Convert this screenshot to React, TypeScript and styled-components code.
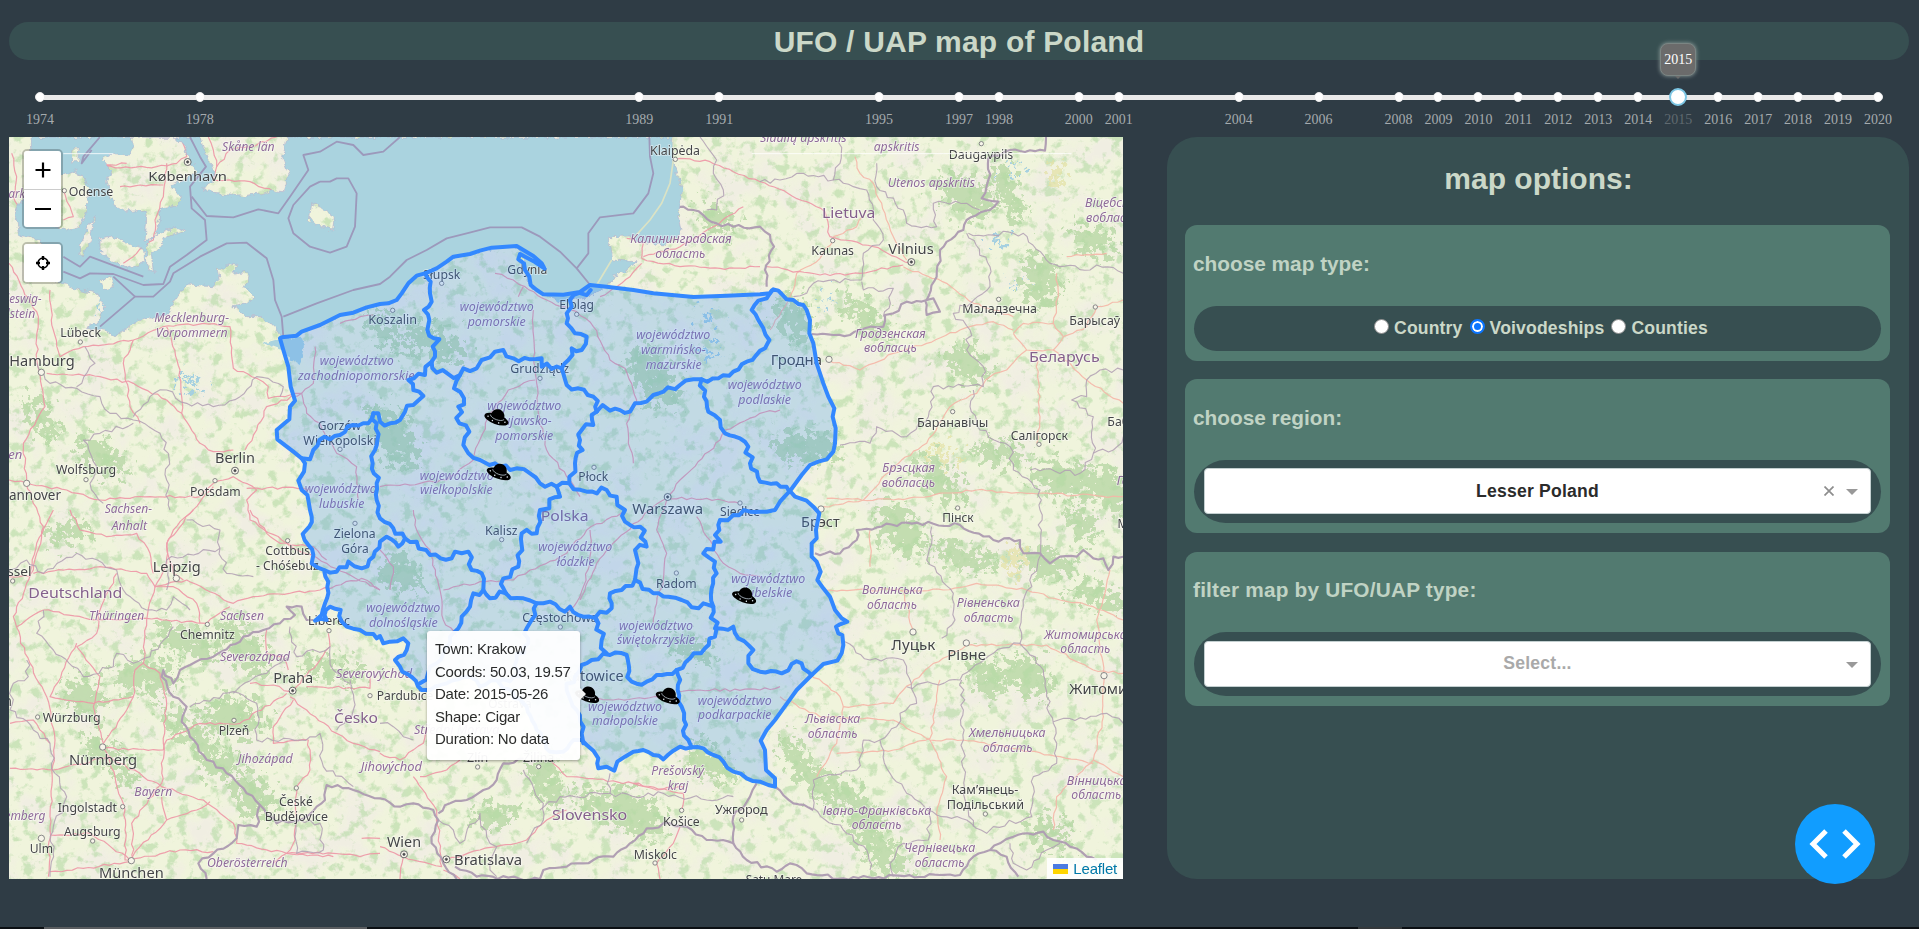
import React from "react";
import styled, { createGlobalStyle } from "styled-components";

/* ---------- palette ---------- */
const c = {
  page: "#2f3c45",
  panel: "#374f51",
  card: "#527a70",
  text: "#cbd8c8",
  track: "#e9e9e9",
};

const Global = createGlobalStyle`
  * { box-sizing: border-box; }
  html, body { margin: 0; background: ${c.page}; overflow: hidden; }
  body { font-family: "Liberation Sans", Arial, sans-serif; }
`;

/* ---------- page frame ---------- */
const Page = styled.div`
  display: flex;
  flex-direction: column;
  width: 1919px;
  height: 929px;
  padding-top: 22px;
  background: ${c.page};
  overflow: hidden;
`;
const Header = styled.header`
  display: flex;
  align-items: center;
  justify-content: center;
  flex: none;
  height: 38px;
  margin: 0 10px 0 9px;
  border-radius: 20px;
  background: ${c.panel};
`;
const Title = styled.h1`
  margin: 2px 0 0;
  font-size: 30px;
  line-height: 36px;
  letter-spacing: 0.2px;
  color: ${c.text};
`;
const Main = styled.main`
  display: flex;
  justify-content: space-between;
  flex: none;
  height: 742px;
  margin: 0 10px 0 9px;
`;
const Taskbar = styled.footer`
  display: flex;
  flex: none;
  height: 2px;
  margin-top: auto;
  background: #0b0f13;
`;
const TaskbarItem = styled.div<{ $start: number; $width: number; $tone: string }>`
  flex: none;
  width: ${(p) => p.$width}px;
  margin-left: ${(p) => p.$start}px;
  background: ${(p) => p.$tone};
`;

/* ---------- timeline ---------- */
const Timeline = styled.section`
  display: grid;
  grid-template-columns: repeat(47, 1fr);
  grid-template-rows: 28px 18px 31px;
  align-items: center;
  flex: none;
  height: 77px;
  margin: 0 21px 0 20px;
`;
const Track = styled.div`
  grid-column: 1 / -1;
  grid-row: 2;
  height: 5px;
  margin: 0 20px;
  border-radius: 3px;
  background: ${c.track};
`;
const Dot = styled.button<{ $col: number; $active: boolean }>`
  grid-column: ${(p) => p.$col};
  grid-row: 2;
  justify-self: center;
  position: relative;
  width: ${(p) => (p.$active ? 18 : 10)}px;
  height: ${(p) => (p.$active ? 18 : 10)}px;
  padding: 0;
  border: ${(p) => (p.$active ? "2px solid #7cc6e4" : "1px solid #e9e9e9")};
  border-radius: 50%;
  background: #fff;
`;
const YearLabel = styled.span<{ $col: number; $active: boolean }>`
  grid-column: ${(p) => p.$col};
  grid-row: 3;
  align-self: start;
  justify-self: center;
  margin-top: 5.5px;
  font: 14px/16px "Liberation Serif", "Times New Roman", serif;
  color: ${(p) => (p.$active ? "#606a70" : "#a5abae")};
`;
const YearTip = styled.span`
  position: absolute;
  left: 50%;
  bottom: 28px;
  transform: translateX(-50%);
  width: 36px;
  height: 33px;
  border: 1px solid #7b8583;
  border-radius: 8px;
  background: #6b6b6b;
  box-shadow: 0 0 4px #93a19f;
  color: #fff;
  font: 14px/31px "Liberation Serif", "Times New Roman", serif;
  text-align: center;
  &::after {
    content: "";
    position: absolute;
    left: 14px;
    top: 32px;
    border: 3px solid transparent;
    border-top-color: #6b6b6b;
  }
`;

/* ---------- map widgets ---------- */
const MapFrame = styled.section`
  position: relative;
  width: 1114px;
  height: 742px;
  overflow: hidden;
`;
const MapCanvas = styled.svg`
  display: block;
  width: 1114px;
  height: 742px;
  font-family: "Noto Sans", "Open Sans", sans-serif;
`;
const Controls = styled.div`
  position: absolute;
  left: 13px;
  top: 12px;
  display: flex;
  flex-direction: column;
  gap: 13px;
`;
const ControlGroup = styled.div`
  display: flex;
  flex-direction: column;
  border: 2px solid rgba(0, 0, 0, 0.22);
  border-radius: 5px;
  overflow: hidden;
  background-clip: padding-box;
`;
const ControlButton = styled.button`
  display: grid;
  place-items: center;
  width: 37px;
  height: 38px;
  padding: 0;
  border: 0;
  background: #fff;
  & + & { border-top: 1px solid #ccc; }
`;
const Attribution = styled.a`
  position: absolute;
  right: 0;
  bottom: 0;
  display: flex;
  align-items: center;
  gap: 5px;
  height: 21px;
  padding: 0 6px;
  background: rgba(255, 255, 255, 0.88);
  color: #0078a8;
  font-size: 15px;
  letter-spacing: -0.2px;
`;
const Flag = styled.span`
  width: 15px;
  height: 10px;
  background: linear-gradient(#4c7be1 50%, #ffd500 50%);
`;
const Popup = styled.div`
  position: absolute;
  left: 418px;
  top: 494px;
  width: 153px;
  height: 129px;
  padding: 7px 8px;
  border-radius: 3px;
  background: #fff;
  box-shadow: 0 1px 3px rgba(0, 0, 0, 0.4);
  opacity: 0.95;
  color: #222;
  font-size: 15px;
  line-height: 22.6px;
  letter-spacing: -0.22px;
  white-space: nowrap;
  &::after {
    content: "";
    position: absolute;
    left: 100%;
    top: 57px;
    border: 6px solid transparent;
    border-left-color: #fff;
  }
`;

/* ---------- options panel ---------- */
const Panel = styled.aside`
  position: relative;
  display: flex;
  flex-direction: column;
  width: 742px;
  height: 742px;
  padding: 24px 19px 0 18px;
  border-radius: 30px;
  background: ${c.panel};
`;
const PanelTitle = styled.h2`
  margin: 0 0 28px;
  font-size: 30px;
  line-height: 36px;
  text-align: center;
  text-indent: 2px;
  color: ${c.text};
`;
const Card = styled.section`
  margin-bottom: 18.5px;
  padding: 24.5px 9px 10px;
  border-radius: 12px;
  background: ${c.card};
`;
const CardTitle = styled.h3<{ $tracking?: number }>`
  margin: 0 0 28px -1px;
  font-size: 20.8px;
  line-height: 28px;
  letter-spacing: ${(p) => p.$tracking ?? 0}px;
  color: #c0d3c4;
`;
const Well = styled.div<{ $tall?: boolean }>`
  display: flex;
  align-items: center;
  justify-content: center;
  gap: 7px;
  height: ${(p) => (p.$tall ? 63.5 : 45)}px;
  padding: 0 10px;
  border-radius: 32px;
  background: ${c.panel};
`;
const RadioRow = styled.div`
  display: flex;
  gap: 7px;
  padding-left: 7px;
`;
const Radio = styled.label`
  display: flex;
  align-items: center;
  color: ${c.text};
  font-size: 17.6px;
  font-weight: bold;
  letter-spacing: 0.15px;
`;
const RadioMark = styled.span<{ $on: boolean }>`
  width: 15px;
  height: 15px;
  margin: 0 5px 3px 0;
  border: ${(p) => (p.$on ? "2px solid #0b75ff" : "1px solid #8b8b8b")};
  border-radius: 50%;
  background: ${(p) => (p.$on ? "#0b75ff" : "#fff")};
  box-shadow: ${(p) => (p.$on ? "inset 0 0 0 2px #fff" : "none")};
`;
const SelectBox = styled.div<{ $empty?: boolean }>`
  position: relative;
  display: flex;
  align-items: center;
  justify-content: center;
  width: 100%;
  height: 46px;
  border: 1px solid #c3cfd0;
  border-radius: 4px;
  background: #fff;
  color: ${(p) => (p.$empty ? "#a9a9a9" : "#2b2b2b")};
  font-size: 17.6px;
  font-weight: bold;
  letter-spacing: 0.2px;
`;
const SelectTools = styled.span`
  position: absolute;
  right: 12px;
  top: 0;
  height: 44px;
  display: flex;
  align-items: center;
  gap: 12px;
`;
const Caret = styled.span`
  margin-top: 2px;
  border: 6px solid transparent;
  border-top: 6px solid #999;
  border-bottom: 0;
`;
const Fab = styled.button`
  position: absolute;
  right: 34px;
  bottom: -5px;
  display: grid;
  place-items: center;
  width: 80px;
  height: 80px;
  padding: 0;
  border: 0;
  border-radius: 50%;
  background: #119dff;
`;

/* ---------- map geometry (3 units per pixel, origin at the page's left edge) ---------- */
type Pt = [number, number];
const parse = (s: string, dx = 0, dy = 0): Pt[] =>
  s.trim().split(/\s+/).map((p) => {
    const [x, y] = p.split(",").map(Number);
    return [x + dx, y + dy];
  });
const noise = (x: number, y: number) => {
  const v = Math.sin(x * 12.9898 + y * 78.233) * 43758.5453;
  return (v - Math.floor(v)) * 2 - 1;
};
/* Adds small bends to long segments so that borders read as natural lines. */
const rough = (pts: Pt[], amp: number): Pt[] => {
  const out: Pt[] = [];
  pts.forEach((p, i) => {
    out.push(p);
    const q = pts[i + 1];
    if (!q) return;
    const len = Math.hypot(q[0] - p[0], q[1] - p[1]);
    const n = Math.floor(len / 15);
    for (let k = 1; k < n; k++) {
      const t = k / n;
      const x = p[0] + (q[0] - p[0]) * t;
      const y = p[1] + (q[1] - p[1]) * t;
      const o = noise(x, y) * amp;
      out.push([x - ((q[1] - p[1]) / len) * o, y + ((q[0] - p[0]) / len) * o]);
    }
  });
  return out;
};
const toPath = (pts: Pt[]) => "M" + pts.map((p) => `${p[0].toFixed(1)},${p[1].toFixed(1)}`).join("L");

const northCoast = parse(
  "845,622 890,617 905,605 960,585 1020,555 1060,548 1100,532 1140,522 1165,520 1190,510 1205,490 1225,460 1250,437 1275,430 1310,415 1340,395 1360,380 1410,372 1440,362 1475,353 1550,348 1600,378 1625,400 1634,416 1605,396 1575,380 1560,372 1555,388 1572,400 1575,420 1588,440 1592,465 1610,480 1630,493 1690,494 1740,486 1770,465 1820,470 1900,480 1960,490 2080,501 2180,497 2280,493"
);
const eastBorder = [
  ...parse("2310,490 2320,478 2335,482 2345,492 2360,508 2380,510 2395,522 2410,525 2420,540 2430,570 2428,610 2440,640 2450,700 2470,760 2485,800 2503,835 2498,860 2507,895 2505,940 2500,965 2480,988 2455,995 2430,1005 2405,1035 2370,1083 2385,1100 2420,1112 2440,1130"),
  ...parse("178,10 168,60 170,85 155,100 155,140 170,155 182,185 172,210 190,235 210,260 225,300 245,325 262,335 240,343 228,350 235,370 247,375 250,405 245,430 232,452 190,462 155,495 110,540 85,575 45,630 20,660 2,692 15,720 18,780 45,805 45,830 25,825 0,815", 2280, 1140),
];
const southBorder = rough(
  [
    ...parse("1140,815 1100,805 1060,785 1030,755 1000,735 970,715 935,712 900,710 880,722 850,748 820,735 790,720 760,725 735,740 712,755 703,782 680,770 655,775 655,745 640,722 620,705 605,690 580,690 550,725 510,725 470,660 440,590 350,510 300,530 270,500 200,520 150,540 125,540 60,470 45,450 80,420 85,400 70,385 30,395 10,400 0,378", 1140, 1140),
    ...parse("1130,385 1120,372 1080,360 1040,350 1025,335 1022,300 990,290 978,300 980,330 945,332 965,315 975,280 985,215 972,180 935,160 940,135 925,105 908,72 928,50 935,20 930,0", 0, 1140),
  ],
  6
);
const westBorder = parse("925,1110 922,1095 905,1080 895,1052 912,1025 915,1000 905,985 880,965 832,928 830,900 868,868 870,830 885,812 872,770 865,710 850,660 840,625");
const polandPath = toPath([...northCoast, ...eastBorder, ...southBorder, ...westBorder]) + "Z";

const B = (s: string) => parse(s, 1140, 0);
const E = (s: string) => parse(s, 1140, 1140);
const regionBorders: Pt[][] = [
  B("135,430 152,455 150,490 155,515 132,540 148,570 142,600 178,628 158,650 165,680 155,695 135,735 85,750 100,780 130,798 100,825 75,845 60,870 30,880 0,875 -5,850 -20,850 -35,880 -80,885 -120,915 -150,928 -182,930 -200,960 -210,988 -235,985"),
  B("155,695 170,728 240,735 250,715 290,715 305,690 330,682 345,665 370,660 400,685 450,688 485,685 485,710 545,715"),
  B("632,480 570,510 575,530 560,550 560,580 585,610 620,620 605,660 575,655 565,690 545,715 560,765 595,775 640,800 650,845"),
  B("650,845 668,825 690,842 750,845 765,820 800,815 820,795 850,785 900,765 940,748 965,748 1015,745 1060,725 1100,695 1155,655 1168,630 1150,595 1135,570 1115,540 1135,512 1160,505 1175,482"),
  B("240,735 222,775 252,805 235,830 238,880 268,905 250,945 265,970 300,990 345,1000 390,1020 410,1015 450,1030 480,1060 530,1070 568,1060"),
  B("650,845 635,855 640,885 605,900 600,930 608,960 585,1000 568,1040 568,1060 620,1085 680,1080 710,1100 712,1125 735,1140 735,1175 780,1190 800,1250 765,1260 775,1300 765,1350"),
  B("530,1070 540,1100 508,1108 508,1135 480,1140 470,1210 425,1210 415,1310 370,1345 378,1390"),
  B("965,748 972,800 985,845 1020,870 1035,910 1080,925 1105,950 1110,1000 1140,1055 1190,1060 1228,1085"),
  B("1228,1085 1200,1115 1185,1140 1160,1145 1140,1145 1110,1145 1060,1155 1020,1170 1018,1200 1005,1215 1022,1235 970,1270 1005,1295 1010,1330 995,1375 1000,1430 1005,1495"),
  E("765,210 820,250 865,260 905,270 935,292 970,280 1000,290"),
  E("765,210 725,240 690,250 695,295 660,305 655,340 665,390 680,430"),
  E("378,250 430,265 470,280 510,275 555,305 570,290 610,320 655,340"),
  E("585,500 605,465 635,450 690,435 740,435 755,515 800,515 830,495 890,480 930,445 975,415 1005,380 1010,355"),
  E("890,480 893,540 905,590 912,630 925,690 935,712"),
  E("1010,355 1060,350 1075,385 1120,420 1105,460 1140,485 1205,490 1235,462 1265,460 1295,495"),
  E("-168,180 -130,185 -95,155 -55,175 -20,140 0,95 20,80 55,110 75,85"),
  B("-20,850 -10,880 -15,960 -22,1000 -10,1060 -10,1110 0,1165 40,1195 75,1225 110,1235 150,1275 215,1285 225,1265 265,1265 275,1320 305,1330 310,1380 330,1405 378,1390"),
  E("310,240 280,250 270,290 245,320 235,355 210,380 190,430 150,470 120,520"),
  E("470,280 455,330 440,355 445,400 410,450 420,500 355,515"),
  E("585,500 560,540 590,600 605,670 610,700"),
];

const seaPath =
  "M90,21 L95,110 L80,180 L45,250 L60,320 L120,325 L132,370 L130,420 L155,455 L200,460 L215,475 L290,488 L312,530 L300,570 L258,595 L310,600 L345,620 L375,600 L420,570 L500,555 L530,500 L560,465 L640,470 L660,445 L655,420 L690,398 L712,405 L700,430 L735,425 L750,440 L735,470 L765,500 L745,520 L700,530 L740,560 L790,560 L820,590 L845,622 " +
  toPath(northCoast.slice(0, 21)).replace("M", "L") +
  " L1550,348 L1570,385 L1580,440 L1600,480 L1680,515 L1770,500 L1820,470 L1840,440 L1880,420 L1910,395 L1835,390 L1825,320 L1885,318 L1910,335 L1990,345 L2045,310 L2032,250 L2048,180 L2020,100 L2018,21 L863,21 L845,80 L867,135 L850,185 L820,182 L740,200 L640,190 L608,175 L640,155 L640,115 L612,60 L600,21 Z " +
  "M395,21 L400,50 L385,75 L330,70 L308,88 L335,120 L318,150 L328,190 L345,225 L385,245 L432,240 L440,270 L435,330 L460,330 L480,275 L480,235 L530,225 L542,200 L515,165 L560,150 L590,125 L565,80 L555,50 L530,21 Z " +
  "M470,312 L520,290 L557,305 L500,320 L480,350 L455,375 L460,430 L440,405 L440,345 Z " +
  "M300,325 L330,318 L390,345 L430,358 L435,395 L380,415 L330,388 L300,360 Z " +
  "M110,120 L180,140 L230,120 L265,170 L262,240 L240,290 L200,300 L150,285 L110,230 Z " +
  "M285,258 L270,330 L245,380 L240,350 L265,290 Z M935,218 L965,235 L1003,260 L998,300 L960,290 L928,270 Z " +
  "M300,450 L330,443 L345,470 L310,480 Z M215,60 L240,60 L235,95 L215,95 Z";

const maritime = [
  "570,21 600,80 618,110 570,170 575,235 615,270 620,330 560,375 510,410 490,462 430,465 340,432 270,430 240,445 190,425",
  "575,200 620,258 700,262 775,238 835,250 870,200 925,120 910,75 960,65 1010,35 1060,45 1090,75 1150,65 1200,21",
  "960,155 990,155 1010,145 1045,145 1070,190 1065,290 1040,350 990,368 930,350 880,310 865,265 880,225 930,170 960,155",
  "300,590 405,500 460,500 510,455 520,430 600,380 680,340 740,338 800,385 820,450 825,510 845,560 850,620",
  "340,440 405,500",
  "850,560 950,520 1060,480 1140,462 1170,440 1220,390 1280,360 1340,325 1400,310 1470,292 1565,292 1620,320 1680,365 1730,415 1768,462",
  "1730,415 1765,370 1765,310 1800,262 1900,250 1945,190 1960,130 1950,80 1948,21",
  "190,380 240,410 270,380 350,410 430,440",
  "300,21 250,80 245,100 275,60",
].map((s) => parse(s));

const C = (s: string) => parse(s, 2280, 0);
const D = (s: string) => parse(s, 0, 1140);
const F = (s: string) => parse(s, 2280, 1140);
const countryBorders: Pt[][] = [
  B("805,190 860,225 910,230 940,240 1010,280 1060,290 1140,290 1170,315 1182,350 1155,420 1160,470"),
  C("155,612 270,615 300,600 370,590 375,555 400,550 440,515 500,510 530,440 540,360 610,300 620,270 690,240 715,215 665,205 685,150 685,85 750,60 855,62 858,21"),
  C("500,510 520,505 540,545 500,555 495,510"),
  F("165,130 240,130 290,90 290,60 440,38 600,45 700,90 780,90 790,130 840,130 870,160 900,140 950,140 970,120 1000,145 1030,145 1045,180 1060,140 1090,140"),
  D("940,330 920,330 905,290 860,290 885,315 840,340 790,360 730,380 720,395 640,440 570,465 540,480 520,520 490,480 485,500 520,560 560,590 545,635 570,680 610,735 680,790 740,850 780,885 770,950 715,945 710,985 640,1030 595,1060 620,1107"),
  D("780,885 830,940 900,930 950,890 975,870 980,825 1060,840 1140,865 1200,890 1240,880 1300,900 1315,930 1295,1000 1330,1060 1370,1107"),
  E("175,910 210,880 260,870 310,840 350,810 370,760 430,745"),
  E("225,1070 290,1100 480,1107 490,1080 560,1070 640,1050 700,1040 750,1000 800,955 870,940 920,950 980,990 1060,1000 1060,920 1110,860 1130,820"),
  E("1060,1000 1100,1050 1190,1085 1230,1060 1280,1090 1390,1105 1740,1095 1780,1040 1830,1020 1860,1000 1900,980 1990,965 2020,990 2070,1010 2120,1040 2150,1050"),
  F("690,1020 740,1040 775,1100"),
  F("45,830 100,880 160,900"),
];
const innerBorders: Pt[][] = [
  F("515,50 500,150 580,250 585,330 545,385"),
  F("840,0 835,150 790,290 780,400 850,480 860,560 880,640 890,760 820,800 815,920 700,950 680,970 620,930 530,915 440,850 390,790 360,690 410,650 420,610 470,580 440,490 430,450 330,450 255,395"),
  F("440,530 600,510 700,430 780,400"),
  F("605,510 610,690 610,850 640,950"),
  F("360,690 310,690 290,780 160,810 160,895 250,960 320,1020 330,1080"),
  F("510,890 505,990 430,1000 390,1060 400,1100"),
  F("880,635 1040,610 1090,640"),
  F("750,1000 760,1060 800,1080 860,1020 900,1000"),
  parse("255,650 285,700 230,770"),
  parse("110,700 150,760 230,775 300,800 330,850 400,870 480,910 505,970 500,1050 510,1140"),
  parse("400,880 300,910 250,930 290,1010 270,1060 310,1120"),
  parse("400,860 450,800 500,780 560,820 640,830 720,800 770,740 850,770 840,800"),
  D("30,180 80,150 130,190 230,130 350,180 370,240 440,300 500,300 520,260 570,300"),
  D("500,240 500,150 660,115 680,190 760,200"),
  D("660,115 660,60 560,30"),
  D("130,300 110,370 160,420 250,500 340,470 350,430 400,460 450,440 520,350"),
  D("80,450 85,500 40,520 30,600 100,660 150,700 165,790 200,860 160,950 150,1100"),
  D("570,590 700,545 770,580 770,690 900,690 960,670 970,770 1060,830"),
  D("1050,510 1060,600 1010,660"),
  D("870,350 890,440 990,410 1000,480 1050,520"),
  D("870,440 800,490 720,530 700,550"),
  D("890,930 890,1030 970,1020 960,940 900,930"),
  C("0,155 60,150 130,130 220,150 280,170 320,180 340,270 370,330 310,370 305,450 190,455 160,460 140,490 100,500"),
  C("220,150 240,100 240,21"),
  C("350,100 350,170 430,240 440,280 530,290 520,220 620,220 660,240"),
  C("620,310 690,410 690,470 580,550 630,600 620,660 670,710 670,770 520,770 505,860 440,920 350,890 330,940 240,945"),
  C("625,310 790,310 870,400 990,420 1010,405 1090,430"),
  C("640,780 630,830 660,900 750,950 760,1020 840,1080 840,1140"),
  C("1090,720 1020,720 980,750 980,800 935,810 1000,860 1000,970 960,1030 810,1020"),
  C("1000,970 1060,960 1090,920"),
  C("305,455 310,480 400,475 370,560"),
  B("960,21 1010,90 1000,130 1030,180 1010,240 980,240"),
  E("480,900 540,860 690,850 690,790"),
  E("690,850 760,860 850,850 980,870 1060,860"),
  E("440,1000 490,930 490,880 430,780"),
  E("175,930 220,960 240,1000 300,910 320,980 350,1010 330,1080 350,1100"),
  E("0,640 40,650 70,680 100,690"),
];

const roads: Pt[][] = [
  parse("27,400 70,480 115,560 110,690 125,770 135,830 70,940 80,1060 100,1120 130,1190 100,1320 40,1460 75,1570 140,1700 165,1830 150,2060 145,2240"),
  parse("140,730 300,740 400,760 500,810 545,850 600,940 640,965 700,960"),
  parse("150,480 160,600 180,680 250,650 400,630 490,590 610,580 690,590 700,715 770,745 805,770 805,805 870,795 905,790"),
  parse("400,630 370,700 390,830 420,880"),
  parse("500,590 540,720 545,850"),
  parse("735,960 770,900 800,830 905,790 940,760 945,650"),
  parse("905,790 920,850 960,880 1010,970 1070,1010 1075,1110"),
  parse("740,1075 910,1075 930,1080"),
  parse("27,1050 80,1060 200,1080 300,1110 420,1100 600,1100 640,1060 700,1040 770,1080 740,1110 750,1170 860,1240 980,1300 1140,1380"),
  parse("640,1070 570,1150 500,1240 500,1300 465,1370 520,1370 590,1420 600,1480"),
  D("100,190 300,170 440,190 465,230 560,210 700,280 760,260 960,240 1085,205 1140,240"),
  D("50,350 130,300 300,330 440,325 500,330 620,340 690,290"),
  D("350,190 300,300 290,370 230,410 300,500 280,590 310,700"),
  D("465,230 440,330 430,460 480,490 500,580 490,700 485,820 395,940 400,1050"),
  D("230,400 150,560 280,580 400,560 405,480 430,460"),
  D("30,640 100,630 150,700"),
  D("310,700 380,600 400,560"),
  D("310,700 345,800 375,900 375,1050 395,1050"),
  D("310,715 490,720 500,690 600,640 720,640 860,550"),
  D("30,775 160,780 330,740 430,800 485,830 610,870 700,940 710,1000 860,1030 1000,1040"),
  D("150,975 270,970 390,1050 540,1020 640,1025"),
  D("150,1085 250,1075 390,1055"),
  D("485,860 500,930 420,1010 395,1045"),
  D("500,930 590,900 630,875"),
  D("870,560 920,600 1010,670 1060,700 1140,725"),
  D("880,570 820,650 820,700 925,690 930,780 890,830 890,930 885,990 860,1030 820,1060"),
  D("880,540 960,450 990,410 985,370"),
  D("920,530 1110,535 1110,500"),
  D("750,520 820,525 870,545"),
  D("800,360 800,430 850,440 865,480"),
  D("27,200 90,200 110,100 140,40 160,0"),
  D("210,0 240,60 320,80 410,70 450,130 460,190"),
  D("580,0 520,60 500,110 520,190 550,210"),
  D("750,0 800,70 840,100 940,110 980,150"),
  D("860,1030 1000,1030 1080,1040 1140,1030"),
  D("1085,985 1140,985"),
  parse("380,100 300,110 470,110 530,100 560,80 540,21"),
  parse("500,100 490,200 465,270 460,330 370,400"),
  parse("650,110 690,60 750,50 830,21"),
  parse("625,21 640,60 650,110 640,150 750,155 820,185"),
  parse("360,170 420,165 490,165"),
  parse("190,180 210,230 220,260 190,270"),
  parse("35,70 50,140 40,200 70,270"),
  B("-120,580 -60,560 -20,555"),
  B("345,430 400,450 435,470 500,510 590,545 640,590 690,690 735,715 770,810 740,880 745,940 760,1000"),
  B("460,540 462,700 470,760 475,850 500,960 560,1040 600,1100"),
  B("465,750 385,780 330,850 295,940 280,990 200,1050 120,1060 0,1070"),
  B("430,470 415,500"),
  B("860,1105 900,1050 1020,930 1035,900 1140,850 1200,840"),
  B("860,1105 980,1105 1080,1120"),
  B("860,1105 820,1130 690,1250 650,1300 600,1410"),
  B("860,1110 830,1200 860,1270 850,1350 830,1420 820,1480"),
  B("880,90 900,85 990,95 1060,125 1140,155 1280,215 1335,245 1350,320 1480,350 1590,400"),
  B("785,385 900,410 1020,415 1140,410"),
  B("785,385 790,340 740,325"),
  B("785,400 750,440 660,500"),
  B("790,380 900,350 1000,290 1090,230"),
  C("285,80 300,130 340,160 375,250 400,320 440,390"),
  C("220,320 290,290 320,240"),
  C("220,330 180,385 110,430 100,480 75,530 30,600"),
  C("20,410 180,435 300,430 430,405"),
  C("430,410 560,460 640,520 760,560"),
  C("205,690 300,720 400,670 500,640 600,600 700,575 760,600"),
  C("760,610 790,580 880,580 910,620 880,660 800,660 760,610"),
  C("880,580 895,500 890,430"),
  C("910,620 980,590 1010,530 1090,510"),
  C("800,660 740,720 690,740 650,790 570,830 500,940 400,1010 310,1110 190,1130"),
  C("830,680 840,860 830,940"),
  C("880,660 980,750 1090,820"),
  C("200,1105 400,1110 650,1080 800,1090 1090,1100"),
  C("920,380 1040,370"),
  F("200,240 550,240 650,220 800,240 900,270 1000,290 1090,330"),
  F("620,405 860,405 1000,480 1090,490"),
  F("1050,180 1010,330 1030,490 1030,620 1000,750 890,860 880,960"),
  F("430,240 460,370"),
  F("620,405 520,460 430,540 400,580 250,590 230,700 170,800"),
  F("150,490 240,560 250,590"),
  F("60,560 180,620 400,630 510,690 610,690 900,740 1000,760"),
  F("230,730 400,720 510,685 540,510"),
  F("510,690 560,800 530,910 540,990"),
  F("1000,750 1090,800"),
  F("330,60 330,170"),
  E("100,0 110,60 150,120 180,240 190,330 230,380"),
  E("190,240 300,215 400,210 450,180 540,140 560,130 620,60 740,0"),
  E("630,60 630,160 600,260 560,310"),
  E("0,120 40,170 30,240"),
  E("950,20 980,80 1030,160 1080,190 1140,200"),
  E("890,545 960,540 1140,540 1200,530"),
  E("620,560 700,570 840,560"),
  E("510,750 560,800 760,820 910,850 905,900"),
  E("100,800 170,900 185,1070 100,1050 70,1040 0,1010"),
  E("200,1050 300,1020 440,990 500,930 560,900"),
  E("120,800 200,780 240,750"),
  E("760,820 830,840 910,830"),
  E("190,1080 240,1107"),
  E("900,950 880,1000 830,1060 840,1107"),
  E("0,730 60,750 130,700 150,640"),
  E("70,1040 60,1107"),
];

type Kind = "city" | "state" | "country";
/* text, centre x, baseline y, width, font size, kind */
const labels: [string, number, number, number, number, Kind][] = [
  ["Skåne län", 745, 63, 158, 37, "state"],
  ["København", 563, 152, 236, 40, "city"],
  ["Odense", 273, 198, 134, 37, "city"],
  ["Schleswig-", 45, 520, 160, 37, "state"],
  ["Holstein", 40, 563, 132, 37, "state"],
  ["Syddanmark", -20, 203, 190, 37, "state"],
  ["Lübeck", 242, 620, 122, 37, "city"],
  ["Mecklenburg-", 575, 577, 225, 37, "state"],
  ["Vorpommern", 575, 620, 216, 37, "state"],
  ["Hamburg", 126, 707, 196, 42, "city"],
  ["Berlin", 705, 998, 120, 42, "city"],
  ["Wolfsburg", 258, 1033, 180, 37, "city"],
  ["Hannover", 90, 1109, 186, 42, "city"],
  ["Potsdam", 646, 1097, 152, 37, "city"],
  ["Niedersachsen", -60, 988, 254, 37, "state"],
  ["Sachsen-", 385, 1150, 142, 37, "state"],
  ["Anhalt", 388, 1200, 106, 37, "state"],
  ["Gorzów", 1018, 899, 130, 37, "city"],
  ["Wielkopolski", 1020, 945, 220, 37, "city"],
  ["Koszalin", 1178, 583, 146, 37, "city"],
  ["województwo", 1070, 706, 222, 37, "state"],
  ["zachodniopomorskie", 1069, 750, 350, 37, "state"],
  ["województwo", 1022, 1090, 216, 37, "state"],
  ["lubuskie", 1025, 1133, 136, 37, "state"],
  ["Słupsk", 1325, 446, 112, 37, "city"],
  ["Gdynia", 1582, 431, 120, 37, "city"],
  ["Elbląg", 1730, 538, 104, 37, "city"],
  ["województwo", 1490, 543, 222, 37, "state"],
  ["pomorskie", 1490, 588, 174, 37, "state"],
  ["województwo", 2020, 628, 222, 37, "state"],
  ["warmińsko-", 2020, 673, 194, 37, "state"],
  ["mazurskie", 2021, 717, 168, 37, "state"],
  ["Grudziądz", 1619, 730, 176, 37, "city"],
  ["województwo", 1573, 840, 222, 37, "state"],
  ["kujawsko-", 1573, 885, 164, 37, "state"],
  ["pomorskie", 1573, 929, 174, 37, "state"],
  ["Płock", 1780, 1053, 90, 37, "city"],
  ["województwo", 1370, 1049, 222, 37, "state"],
  ["wielkopolskie", 1369, 1093, 218, 37, "state"],
  ["Klaipėda", 2025, 75, 150, 37, "city"],
  ["Калининградская", 2043, 339, 304, 37, "state"],
  ["область", 2041, 384, 150, 37, "state"],
  ["Warszawa", 2003, 1153, 212, 42, "city"],
  ["Siedlce", 2220, 1158, 120, 37, "city"],
  ["Polska", 1694, 1172, 144, 42, "country"],
  ["Šiaulių apskritis", 2410, 37, 260, 37, "state"],
  ["apskritis", 2690, 63, 138, 37, "state"],
  ["Daugavpils", 2943, 86, 194, 37, "city"],
  ["Utenos apskritis", 2794, 170, 262, 37, "state"],
  ["Lietuva", 2546, 265, 160, 42, "country"],
  ["Kaunas", 2498, 375, 128, 37, "city"],
  ["Vilnius", 2733, 371, 136, 42, "city"],
  ["Віцебская", 3340, 231, 170, 37, "state"],
  ["вобласць", 3338, 276, 160, 37, "state"],
  ["Маладзечна", 2999, 549, 224, 37, "city"],
  ["Барысаў", 3284, 584, 152, 37, "city"],
  ["Гродзенская", 2671, 623, 212, 37, "state"],
  ["вобласць", 2671, 667, 158, 37, "state"],
  ["Гродна", 2389, 705, 154, 42, "city"],
  ["Беларусь", 3193, 696, 212, 42, "country"],
  ["województwo", 2294, 778, 222, 37, "state"],
  ["podlaskie", 2294, 822, 158, 37, "state"],
  ["Баранавічы", 2858, 891, 214, 37, "city"],
  ["Салігорск", 3118, 930, 172, 37, "city"],
  ["Бабруйск", 3405, 888, 166, 37, "city"],
  ["Брэсцкая", 2726, 1027, 158, 37, "state"],
  ["вобласць", 2725, 1071, 160, 37, "state"],
  ["Гомельская", 3450, 1064, 200, 37, "state"],
  ["Kassel", 34, 1337, 122, 37, "city"],
  ["Leipzig", 530, 1325, 144, 42, "city"],
  ["Deutschland", 226, 1403, 282, 42, "country"],
  ["Thüringen", 350, 1471, 166, 37, "state"],
  ["Sachsen", 726, 1470, 132, 37, "state"],
  ["Chemnitz", 622, 1527, 164, 37, "city"],
  ["Cottbus", 863, 1276, 134, 37, "city"],
  ["- Chóśebuz", 862, 1321, 188, 37, "city"],
  ["Zielona", 1064, 1223, 126, 37, "city"],
  ["Góra", 1065, 1268, 82, 37, "city"],
  ["Liberec", 987, 1486, 126, 37, "city"],
  ["Severozápad", 765, 1594, 210, 37, "state"],
  ["Severovýchod", 1122, 1643, 228, 37, "state"],
  ["Praha", 880, 1660, 120, 42, "city"],
  ["Česko", 1068, 1778, 132, 42, "country"],
  ["Würzburg", 215, 1776, 174, 37, "city"],
  ["Frankfurt am Main", -130, 1727, 330, 42, "city"],
  ["Plzeň", 702, 1815, 92, 37, "city"],
  ["Nürnberg", 309, 1905, 204, 42, "city"],
  ["Jihozápad", 796, 1899, 164, 37, "state"],
  ["Jihovýchod", 1174, 1924, 184, 37, "state"],
  ["Bayern", 460, 1998, 114, 37, "state"],
  ["Ingolstadt", 262, 2046, 178, 37, "city"],
  ["Württemberg", 30, 2069, 212, 37, "state"],
  ["České", 888, 2028, 102, 37, "city"],
  ["Budějovice", 889, 2073, 190, 37, "city"],
  ["Augsburg", 277, 2119, 170, 37, "city"],
  ["Ulm", 124, 2169, 70, 37, "city"],
  ["Oberösterreich", 742, 2211, 242, 37, "state"],
  ["München", 394, 2245, 194, 42, "city"],
  ["Kalisz", 1504, 1216, 98, 37, "city"],
  ["województwo", 1726, 1264, 222, 37, "state"],
  ["łódzkie", 1727, 1307, 114, 37, "state"],
  ["Radom", 2029, 1374, 122, 37, "city"],
  ["województwo", 1210, 1446, 222, 37, "state"],
  ["dolnośląskie", 1210, 1490, 206, 37, "state"],
  ["Częstochowa", 1680, 1477, 226, 37, "city"],
  ["województwo", 1968, 1499, 222, 37, "state"],
  ["świętokrzyskie", 1968, 1543, 234, 37, "state"],
  ["Katowice", 1780, 1652, 182, 42, "city"],
  ["województwo", 1875, 1742, 222, 37, "state"],
  ["małopolskie", 1875, 1785, 198, 37, "state"],
  ["Pardubice", 1215, 1711, 170, 37, "city"],
  ["Ostrava", 1530, 1735, 130, 37, "city"],
  ["Střední Morava", 1370, 1811, 256, 37, "state"],
  ["Zlín", 1433, 1896, 64, 37, "city"],
  ["Žilina", 1616, 1896, 94, 37, "city"],
  ["Prešovský", 2033, 1935, 158, 37, "state"],
  ["kraj", 2034, 1979, 62, 37, "state"],
  ["Slovensko", 1769, 2071, 226, 42, "country"],
  ["Košice", 2044, 2088, 110, 37, "city"],
  ["Ужгород", 2224, 2053, 158, 37, "city"],
  ["Wien", 1212, 2150, 102, 42, "city"],
  ["Bratislava", 1464, 2204, 204, 42, "city"],
  ["Miskolc", 1966, 2186, 130, 37, "city"],
  ["Satu Mare", 2322, 2262, 170, 37, "city"],
  ["województwo", 2305, 1358, 222, 37, "state"],
  ["lubelskie", 2304, 1402, 146, 37, "state"],
  ["województwo", 2204, 1724, 222, 37, "state"],
  ["podkarpackie", 2204, 1768, 220, 37, "state"],
  ["Брэст", 2461, 1191, 116, 42, "city"],
  ["Пінск", 2874, 1175, 94, 37, "city"],
  ["Мазыр", 3410, 1194, 115, 37, "city"],
  ["Волинська", 2677, 1392, 182, 37, "state"],
  ["область", 2676, 1436, 150, 37, "state"],
  ["Рівненська", 2965, 1432, 190, 37, "state"],
  ["область", 2966, 1476, 150, 37, "state"],
  ["Луцьк", 2740, 1560, 132, 42, "city"],
  ["Рівне", 2900, 1591, 116, 42, "city"],
  ["Житомирська", 3256, 1527, 248, 37, "state"],
  ["область", 3256, 1570, 150, 37, "state"],
  ["Житомир", 3308, 1691, 200, 42, "city"],
  ["Львівська", 2498, 1780, 166, 37, "state"],
  ["область", 2498, 1824, 150, 37, "state"],
  ["Хмельницька", 3022, 1820, 230, 37, "state"],
  ["область", 3023, 1865, 150, 37, "state"],
  ["Вінницька", 3290, 1964, 180, 37, "state"],
  ["область", 3289, 2008, 150, 37, "state"],
  ["Кам’янець-", 2955, 1993, 200, 37, "city"],
  ["Подільський", 2956, 2037, 232, 37, "city"],
  ["Івано-Франківська", 2631, 2054, 326, 37, "state"],
  ["область", 2630, 2098, 150, 37, "state"],
  ["Чернівецька", 2819, 2167, 214, 37, "state"],
  ["область", 2819, 2211, 150, 37, "state"],
];
const tone = { city: "#444547", state: "#8f6b9a", country: "#84608c" };

const towns = parse(
  "193,182 241,636 124,727 80,1060 258,1049 645,1052 1020,958 38,1353 529,1345 622,1483 863,1232 1065,1180 987,1502 1110,1697 113,1761 702,1771 308,1851 368,2030 889,1974 124,2125 278,2133 394,2192 1178,541 1325,460 1730,553 1620,745 1782,1012 2026,88 2220,1119 2498,332 2944,41 2996,508 3286,531 2487,688 2858,845 3117,943 2463,1137 2873,1134 1505,1229 2029,1329 1681,1491 1433,1911 1616,1910 2045,2041 2225,2070 1965,2199 2739,1506 2899,1539 3312,1637 2956,2052"
);
const bigTowns = new Set([124, 80, 529, 308, 394, 2487, 2463, 2739, 2899, 3312]);
const capitals = parse("563,96 705,1022 878,1682 1212,2173 1339,2188 2003,1101 2734,396");
const woods = parse(
  "200,1210 300,980 440,1640 560,1800 660,1900 760,2000 1000,1620 730,1550 1200,1330 1150,600 1300,640 1960,740 2080,1560 2380,570 2900,200 3020,180 3280,330 3120,450 2600,560 2420,950 2900,700 3000,970 2820,1050 3200,1050 3240,1180 3140,1300 2700,1200 2890,1280 2960,1640 3080,1640 2400,1900 2500,1980 2600,2080 1800,2030 1640,1950 1900,2050 1480,2060 2130,1900 700,1760 330,1890 3150,2110 3330,1080 3300,1400 2640,2160 250,1700 120,860 560,1540 1180,920 2150,270"
);

const ufos: Pt[] = [[1491, 863], [1498, 1027], [2234, 1398], [1763, 1695], [2005, 1699]];

const Ufo = ({ at }: { at: Pt }) => (
  <g transform={`translate(${at[0]},${at[1]}) rotate(20)`}>
    <ellipse rx="38" ry="15" cy="5" fill="#000" />
    <path d="M-21,-1 C-22,-34 22,-34 21,-1 C12,6 -12,6 -21,-1Z" fill="#000" />
    <path d="M-22,-2 C-16,9 16,9 22,-2" fill="none" stroke="#c9d6e2" strokeWidth="2" />
    <g fill="#dfe7ee">
      <circle cx="-27" cy="5" r="2.2" />
      <circle cx="-10" cy="13" r="2.2" />
      <circle cx="10" cy="13" r="2.2" />
      <circle cx="27" cy="5" r="2.2" />
    </g>
  </g>
);

const MapDrawing = () => (
  <MapCanvas viewBox="27 21 3342 2226" preserveAspectRatio="none">
    <defs>
      <filter id="forest" x="0" y="0" width="100%" height="100%" colorInterpolationFilters="sRGB">
        <feTurbulence type="fractalNoise" baseFrequency="0.03" numOctaves="5" seed="8" />
        <feColorMatrix values="0 0 0 0 0.70  0 0 0 0 0.85  0 0 0 0 0.64  6 0 0 0 -3.2" />
      </filter>
      <filter id="fields" x="0" y="0" width="100%" height="100%" colorInterpolationFilters="sRGB">
        <feTurbulence type="fractalNoise" baseFrequency="0.009" numOctaves="5" seed="21" />
        <feColorMatrix values="0 0 0 0 0.945  0 0 0 0 0.93  0 0 0 0 0.895  4 0 0 0 -1.8" />
      </filter>
      <filter id="ragged" x="-20%" y="-20%" width="140%" height="140%" colorInterpolationFilters="sRGB">
        <feTurbulence type="fractalNoise" baseFrequency="0.045" numOctaves="5" seed="3" />
        <feDisplacementMap in="SourceGraphic" scale="150" xChannelSelector="R" yChannelSelector="G" />
      </filter>
      <filter id="shore" x="0" y="0" width="100%" height="100%">
        <feTurbulence type="fractalNoise" baseFrequency="0.05" numOctaves="3" seed="5" />
        <feDisplacementMap in="SourceGraphic" scale="22" xChannelSelector="R" yChannelSelector="G" />
      </filter>
    </defs>
    <rect x="27" y="21" width="3342" height="2226" fill="#f0f4dc" />
    <rect x="27" y="21" width="3342" height="2226" filter="url(#fields)" opacity="0.8" />
    <g fill="#b8d8a6" opacity="0.8" filter="url(#ragged)">
      {woods.map(([x, y], i) => (
        <ellipse key={i} cx={x} cy={y} rx={66 + (i % 4) * 14} ry={32 + (i % 3) * 10} transform={`rotate(${(i * 37) % 70} ${x} ${y})`} />
      ))}
    </g>
    <rect x="27" y="21" width="3342" height="2226" filter="url(#forest)" opacity="0.58" />
    <g filter="url(#ragged)" fill="#a5d0e0">
      <ellipse cx="570" cy="760" rx="30" ry="12" transform="rotate(30 570 760)" />
      <ellipse cx="2120" cy="560" rx="18" ry="22" />
      <ellipse cx="2130" cy="670" rx="24" ry="12" />
      <ellipse cx="2990" cy="335" rx="22" ry="12" />
      <ellipse cx="3035" cy="118" rx="12" ry="12" />
      <ellipse cx="3050" cy="455" rx="22" ry="5" />
      <ellipse cx="2470" cy="510" rx="14" ry="8" />
      <ellipse cx="300" cy="545" rx="8" ry="14" />
    </g>
    <g filter="url(#ragged)" fill="#e3e2a4" opacity="0.7">
      <ellipse cx="3170" cy="135" rx="24" ry="24" />
      <ellipse cx="2825" cy="970" rx="44" ry="16" />
      <ellipse cx="3040" cy="1290" rx="22" ry="44" />
    </g>

    <g fill="none" stroke="#ee96a6" strokeWidth="3.6" strokeLinejoin="round" opacity="0.9">
      {roads.map((r, i) => (
        <path key={i} d={toPath(rough(r, 4))} stroke={r[0][0] > 2300 ? "#f5b6a8" : undefined} />
      ))}
    </g>
    <g fill="none" stroke="#b09fb3" strokeLinejoin="round">
      {innerBorders.map((r, i) => <path key={i} d={toPath(rough(r, 8))} strokeWidth="3.4" opacity="0.85" />)}
      {countryBorders.map((r, i) => <path key={i} d={toPath(rough(r, 6))} strokeWidth="6.5" />)}
    </g>

    <path d={seaPath} fill="#aad3df" fillRule="evenodd" stroke="#b3b4cd" strokeWidth="2" filter="url(#shore)" />
    <path d="M845,625 L790,640 L830,655 L860,665 L870,690 L900,705 L915,650 L905,620Z" fill="#aad3df" filter="url(#shore)" />
    <path d="M1790,465 L1835,390 M1900,325 L1950,270 L1985,220 L2010,160 L2020,90 L2020,21" fill="none" stroke="#dbe3c5" strokeWidth="5" />
    <g fill="none" stroke="#9b93b8" strokeWidth="5.5" strokeLinejoin="round" opacity="0.9">
      {maritime.map((r, i) => <path key={i} d={toPath(r)} />)}
    </g>

    <g fill="#f7f5ea" stroke="#77777a" strokeWidth="2.6">
      {towns.map(([x, y], i) => <circle key={i} cx={x} cy={y} r={bigTowns.has(x) ? 9.5 : 6.5} />)}
    </g>
    {capitals.map(([x, y], i) => (
      <g key={i} fill="#f7f5ea" stroke="#55565a" strokeWidth="2.6">
        <circle cx={x} cy={y} r="10.5" />
        <circle cx={x} cy={y} r="3.4" fill="#444" />
      </g>
    ))}
    {labels.map(([t, x, y, w, size, kind], i) => (
      <text
        key={i}
        x={x}
        y={y}
        fontSize={size}
        textAnchor="middle"
        textLength={w}
        lengthAdjust="spacingAndGlyphs"
        fontStyle={kind === "state" ? "italic" : "normal"}
        fill={tone[kind]}
        stroke="#fff"
        strokeOpacity="0.5"
        strokeWidth="5"
        paintOrder="stroke"
      >
        {t}
      </text>
    ))}

    <path d="M190,71 H340 M2255,71 H3215" stroke="#fff" strokeWidth="3" opacity="0.8" />
    <g stroke="#3388ff" strokeWidth="12" strokeLinejoin="round" strokeLinecap="round">
      <path d={polandPath} fill="#3388ff" fillOpacity="0.24" />
      {regionBorders.map((r, i) => <path key={i} d={toPath(rough(r, 11))} fill="none" />)}
    </g>
    {ufos.map((p, i) => <Ufo key={i} at={p} />)}
  </MapCanvas>
);

const years = [1974, 1978, 1989, 1991, 1995, 1997, 1998, 2000, 2001, 2004, 2006, 2008, 2009, 2010, 2011, 2012, 2013, 2014, 2015, 2016, 2017, 2018, 2019, 2020];
const selectedYear = 2015;
const mapTypes = ["Country", "Voivodeships", "Counties"];

export default function App() {
  return (
    <>
      <Global />
      <Page>
        <Header>
          <Title>UFO / UAP map of Poland</Title>
        </Header>

        <Timeline>
          <Track />
          {years.map((y) => (
            <React.Fragment key={y}>
              <Dot $col={y - 1973} $active={y === selectedYear}>
                {y === selectedYear && <YearTip>{y}</YearTip>}
              </Dot>
              <YearLabel $col={y - 1973} $active={y === selectedYear}>{y}</YearLabel>
            </React.Fragment>
          ))}
        </Timeline>

        <Main>
          <MapFrame>
            <MapDrawing />
            <Controls>
              <ControlGroup>
                <ControlButton aria-label="Zoom in">
                  <svg width="16" height="16" viewBox="0 0 16 16"><path d="M8 0.5V15.5M0.5 8H15.5" stroke="#000" strokeWidth="2.2" /></svg>
                </ControlButton>
                <ControlButton aria-label="Zoom out">
                  <svg width="16" height="16" viewBox="0 0 16 16"><path d="M0 8H16" stroke="#000" strokeWidth="2" /></svg>
                </ControlButton>
              </ControlGroup>
              <ControlGroup>
                <ControlButton aria-label="Locate">
                  <svg width="16" height="16" viewBox="0 0 16 16" fill="none" stroke="#000">
                    <circle cx="8" cy="8" r="5" strokeWidth="1.5" />
                    <path d="M8 1V5M8 11V15M1 8H5M11 8H15" strokeWidth="2.4" />
                  </svg>
                </ControlButton>
              </ControlGroup>
            </Controls>
            <Popup>
              <div>Town: Krakow</div>
              <div>Coords: 50.03, 19.57</div>
              <div>Date: 2015-05-26</div>
              <div>Shape: Cigar</div>
              <div>Duration: No data</div>
            </Popup>
            <Attribution><Flag />Leaflet</Attribution>
          </MapFrame>

          <Panel>
            <PanelTitle>map options:</PanelTitle>
            <Card>
              <CardTitle>choose map type:</CardTitle>
              <Well>
                <RadioRow>
                  {mapTypes.map((t) => (
                    <Radio key={t}><RadioMark $on={t === "Voivodeships"} />{t}</Radio>
                  ))}
                </RadioRow>
              </Well>
            </Card>
            <Card>
              <CardTitle>choose region:</CardTitle>
              <Well $tall>
                <SelectBox>
                  Lesser Poland
                  <SelectTools>
                    <svg width="10" height="10" viewBox="0 0 10 10"><path d="M0.5 0.5L9.5 9.5M9.5 0.5L0.5 9.5" stroke="#8d8d8d" strokeWidth="1.7" /></svg>
                    <Caret />
                  </SelectTools>
                </SelectBox>
              </Well>
            </Card>
            <Card>
              <CardTitle $tracking={0.2}>filter map by UFO/UAP type:</CardTitle>
              <Well $tall>
                <SelectBox $empty>
                  Select...
                  <SelectTools><Caret /></SelectTools>
                </SelectBox>
              </Well>
            </Card>
            <Fab aria-label="Debug menu">
              <svg width="52" height="30" viewBox="0 0 52 30" fill="none" stroke="#fff" strokeWidth="5">
                <path d="M17 2L4 15L17 28M35 2L48 15L35 28" />
              </svg>
            </Fab>
          </Panel>
        </Main>

        <Taskbar>
          <TaskbarItem $start={44} $width={323} $tone="#5a5d60" />
          <TaskbarItem $start={991} $width={44} $tone="#34383b" />
        </Taskbar>
      </Page>
    </>
  );
}
